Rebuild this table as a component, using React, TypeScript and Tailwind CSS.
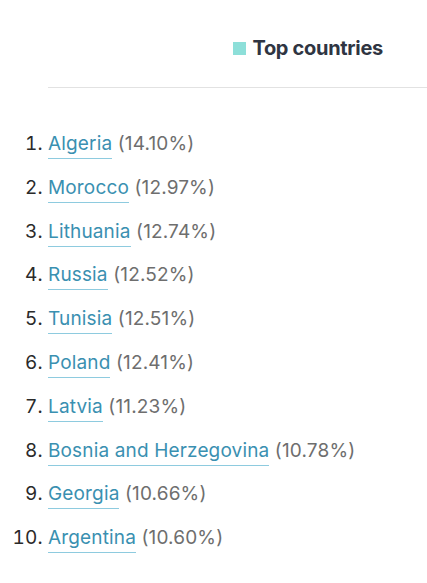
import React from 'react';

type Country = { name: string; share: string };

const countries: Country[] = [
	{ name: 'Algeria', share: '14.10%' },
	{ name: 'Morocco', share: '12.97%' },
	{ name: 'Lithuania', share: '12.74%' },
	{ name: 'Russia', share: '12.52%' },
	{ name: 'Tunisia', share: '12.51%' },
	{ name: 'Poland', share: '12.41%' },
	{ name: 'Latvia', share: '11.23%' },
	{ name: 'Bosnia and Herzegovina', share: '10.78%' },
	{ name: 'Georgia', share: '10.66%' },
	{ name: 'Argentina', share: '10.60%' },
];

const App: React.FC = () => {
	return (
		<main className="w-[427px] h-[583px] bg-white overflow-hidden" style={{ fontFamily: 'Inter, "Noto Sans", sans-serif' }}>
			<div className="pl-[48px]">
				<div className="flex items-center justify-end pr-[44px] pt-[36px] pb-[27px] border-b border-[#e2e2e2]">
					<span className="w-[13px] h-[13px] bg-[#8ddfd9] mr-[6px]" />
					<h2 className="text-[20px] leading-[24px] font-bold text-[#2f3542] tracking-[-0.3px]">Top countries</h2>
				</div>
			</div>
			<ol className="list-decimal pl-[48px] pt-[42px] text-[19px] leading-[28px] text-[#333] tracking-[0.15px]">
				{countries.map((c) => (
					<li key={c.name} className="mb-[15.8px] marker:text-[#2a2a2a]">
						<a href="#" className="text-[#3a90b1] border-b border-[#8ecbdf] pb-[3px]">
							{c.name}
						</a>{' '}
						<span className="text-[#6e6e6e]">({c.share})</span>
					</li>
				))}
			</ol>
		</main>
	);
};

export default App;
